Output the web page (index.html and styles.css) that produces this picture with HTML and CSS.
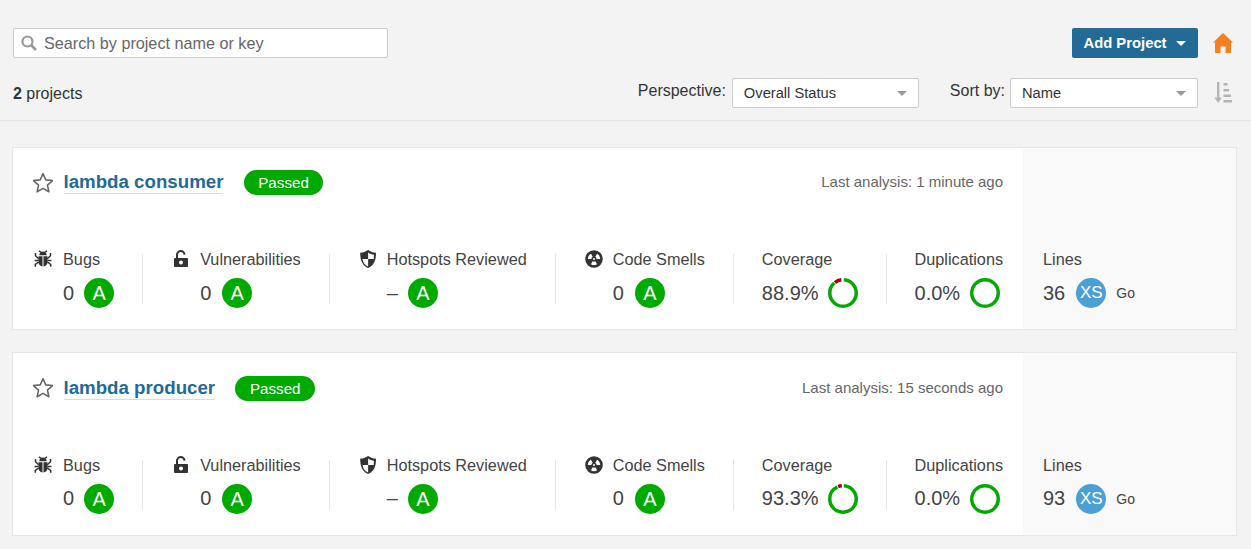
FILE: index.html
```html
<!DOCTYPE html>
<html lang="en">
  <head>
    <meta charset="UTF-8" />
    <title>Projects</title>
    <link rel="stylesheet" href="styles.css">
  </head>
  <body>
    <svg class="defs" width="0" height="0">
      <symbol id="i-star" viewBox="1 1 18 18"><path d="M10 1.600l2.500 5.600 6.100.6-4.600 4.100 1.300 6-5.300-3.100-5.300 3.100 1.300-6L1.400 7.800l6.100-.6z" fill="none" stroke="currentColor" stroke-width="1.400" stroke-linejoin="round"/></symbol>
      <symbol id="i-bug" viewBox="0 0 18 18"><path d="M5.300 5.200c0-2.200 1.600-3.700 3.700-3.700s3.700 1.500 3.700 3.700zM4.500 6.200h4v10.300C6 16.300 4.500 14.300 4.500 12zM9.500 6.200h4V12c0 2.300-1.500 4.300-4 4.500z"/><path d="M1.500 3v2.800l3.200 3M16.500 3v2.800l-3.200 3M.6 10.500h4.100M17.400 10.500h-4.100M1.300 16.800v-2.300l3.400-2.500M16.700 16.800v-2.300L13.300 12M5 .8l2.300 1.700M13 .8l-2.300 1.700" fill="none" stroke="currentColor" stroke-width="1.500"/></symbol>
      <symbol id="i-lock" viewBox="0 0 18 18"><path d="M3 8h12a1 1 0 0 1 1 1v7a1 1 0 0 1-1 1H3a1 1 0 0 1-1-1V9a1 1 0 0 1 1-1zm6 2.500a2 2 0 1 0 0 4 2 2 0 0 0 0-4z" fill-rule="evenodd"/><path d="M5 8V5.200a3.800 3.800 0 0 1 7.600-.6" fill="none" stroke="currentColor" stroke-width="2"/></symbol>
      <symbol id="i-shield" viewBox="1.400 .8 15 16.400"><path d="M9 .8c2.300 1.600 4.500 2.200 7.200 2.400 0 6.800-1.700 11.500-7.200 14-5.500-2.500-7.200-7.200-7.200-14C4.500 3 6.700 2.400 9 .8zM9 3v6H3.900c.4 3 1.900 5.500 5.100 6.900V9h5.100c.1-1 .2-2 .2-3.900C12.500 5 10.700 4.200 9 3z" fill-rule="evenodd"/></symbol>
      <symbol id="i-smell" viewBox="0 0 18 18"><path d="M9 .2a8.800 8.800 0 1 1 0 17.600A8.800 8.800 0 0 1 9 .2zM2.800 9A6.200 6.200 0 0 1 5.900 3.630L7.700 6.750A2.600 2.600 0 0 0 6.400 9zM15.200 9A6.200 6.200 0 0 0 12.100 3.630L10.300 6.750A2.600 2.600 0 0 1 11.600 9zM5.900 14.370A6.200 6.200 0 0 0 12.100 14.370L10.300 11.250A2.600 2.600 0 0 1 7.700 11.250z" fill-rule="evenodd"/><circle cx="9" cy="9" r="1" fill="#fff"/></symbol>
      <symbol id="i-ring" viewBox="0 0 30 30"><circle cx="15" cy="15" r="13.250" fill="none" stroke="currentColor" stroke-width="3.500"/></symbol>
    </svg>

    <header class="top-bar">
      <div class="top-row">
        <label class="search">
          <svg class="search-icon" width="16" height="16" viewBox="0 0 16 16"><circle cx="6.500" cy="6.500" r="5" fill="none" stroke="currentColor" stroke-width="2.200"/><path d="M10 10l5 5" stroke="currentColor" stroke-width="2.600"/></svg>
          <input type="text" placeholder="Search by project name or key" />
        </label>
        <button class="add-btn">Add Project<span class="caret"></span></button>
        <svg class="home" width="20" height="20" viewBox="0 0 20 20"><path d="M10 0l10 9.500h-2V20h-5.500v-6.500h-5V20H2V9.500H0z" fill="currentColor"/></svg>
      </div>
      <div class="filter-row">
        <div class="count"><strong>2</strong> projects</div>
        <span class="filter-label">Perspective:</span>
        <div class="select select-wide">Overall Status<span class="caret"></span></div>
        <span class="filter-label sort-label">Sort by:</span>
        <div class="select select-sort">Name<span class="caret"></span></div>
        <svg class="sort" width="20" height="24" viewBox="0 0 20 24"><path d="M4 1h2.400v15.500H9L5.200 22 1.400 16.500H4z" fill="currentColor"/><path d="M10.500 2h4v2.500h-4zM10.500 8h5.500v2.500h-5.500zM10.500 13.500h7.500V16h-7.500zM10.500 19H19v2.500h-8.500z" fill="currentColor"/></svg>
      </div>
    </header>

    <main class="projects">
      <article class="card">
        <div class="card-main">
          <div class="card-head">
            <svg class="star" width="20" height="20"><use href="#i-star"/></svg>
            <a class="title" href="#">lambda consumer</a>
            <span class="passed">Passed</span>
            <span class="last">Last analysis: 1 minute ago</span>
          </div>
          <div class="measures">
            <div class="measure"><svg class="m-icon"><use href="#i-bug"/></svg><div class="m-body"><div class="label">Bugs</div><div class="value">0<span class="grade">A</span></div></div></div>
            <div class="measure"><svg class="m-icon"><use href="#i-lock"/></svg><div class="m-body"><div class="label">Vulnerabilities</div><div class="value">0<span class="grade">A</span></div></div></div>
            <div class="measure"><svg class="m-icon"><use href="#i-shield"/></svg><div class="m-body"><div class="label">Hotspots Reviewed</div><div class="value">–<span class="grade">A</span></div></div></div>
            <div class="measure"><svg class="m-icon"><use href="#i-smell"/></svg><div class="m-body"><div class="label">Code Smells</div><div class="value">0<span class="grade">A</span></div></div></div>
            <div class="measure measure-plain"><div class="m-body"><div class="label">Coverage</div><div class="value">88.9%<svg class="ring" viewBox="0 0 30 30"><circle class="arc-ok" cx="15" cy="15" r="13.250" pathLength="100" stroke-dasharray="87.500 12.500" stroke-dashoffset="-1"/><circle class="arc-bad" cx="15" cy="15" r="13.250" pathLength="100" stroke-dasharray="8.500 91.500" stroke-dashoffset="-89.500"/></svg></div></div></div>
            <div class="measure measure-plain"><div class="m-body"><div class="label">Duplications</div><div class="value">0.0%<svg class="ring ring-full"><use href="#i-ring"/></svg></div></div></div>
          </div>
        </div>
        <div class="card-side">
          <div class="label">Lines</div>
          <div class="value">36<span class="size">XS</span><span class="lang">Go</span></div>
        </div>
      </article>

      <article class="card">
        <div class="card-main">
          <div class="card-head">
            <svg class="star" width="20" height="20"><use href="#i-star"/></svg>
            <a class="title" href="#">lambda producer</a>
            <span class="passed">Passed</span>
            <span class="last">Last analysis: 15 seconds ago</span>
          </div>
          <div class="measures">
            <div class="measure"><svg class="m-icon"><use href="#i-bug"/></svg><div class="m-body"><div class="label">Bugs</div><div class="value">0<span class="grade">A</span></div></div></div>
            <div class="measure"><svg class="m-icon"><use href="#i-lock"/></svg><div class="m-body"><div class="label">Vulnerabilities</div><div class="value">0<span class="grade">A</span></div></div></div>
            <div class="measure"><svg class="m-icon"><use href="#i-shield"/></svg><div class="m-body"><div class="label">Hotspots Reviewed</div><div class="value">–<span class="grade">A</span></div></div></div>
            <div class="measure"><svg class="m-icon"><use href="#i-smell"/></svg><div class="m-body"><div class="label">Code Smells</div><div class="value">0<span class="grade">A</span></div></div></div>
            <div class="measure measure-plain"><div class="m-body"><div class="label">Coverage</div><div class="value">93.3%<svg class="ring" viewBox="0 0 30 30"><circle class="arc-ok" cx="15" cy="15" r="13.250" pathLength="100" stroke-dasharray="92 8" stroke-dashoffset="-1"/><circle class="arc-bad" cx="15" cy="15" r="13.250" pathLength="100" stroke-dasharray="4.500 95.500" stroke-dashoffset="-94"/></svg></div></div></div>
            <div class="measure measure-plain"><div class="m-body"><div class="label">Duplications</div><div class="value">0.0%<svg class="ring ring-full"><use href="#i-ring"/></svg></div></div></div>
          </div>
        </div>
        <div class="card-side">
          <div class="label">Lines</div>
          <div class="value">93<span class="size">XS</span><span class="lang">Go</span></div>
        </div>
      </article>
    </main>
  </body>
</html>
```

FILE: styles.css
```css
body {
  margin: 0;
  background-color: #f3f3f3;
  color: #333;
  font-family: "Liberation Sans", Arial, sans-serif;
  font-size: 16px;
  overflow: hidden;
}
.defs {
  position: absolute;
}
.top-bar {
  padding: 28px 18px 12px 13px;
  border-bottom: 1px solid #e6e6e6;
}
.top-row,
.filter-row {
  display: flex;
  align-items: center;
  height: 30px;
}
.filter-row {
  margin-top: 20px;
}
.search {
  display: flex;
  align-items: center;
  width: 373px;
  height: 28px;
  background-color: #fff;
  border: 1px solid #cdcdcd;
  border-radius: 2px;
}
.search-icon {
  margin: 0 7px;
  color: #999;
  flex: none;
}
.search input {
  border: none;
  outline: none;
  padding: 0;
  width: 320px;
  color: #333;
  font-family: inherit;
  font-size: 16.200px;
}
.search input::placeholder {
  color: #666;
  opacity: 1;
}
.add-btn {
  display: flex;
  align-items: center;
  margin-left: auto;
  width: 126px;
  height: 30px;
  padding: 0 0 0 11.500px;
  background-color: #236a97;
  color: #fff;
  border: none;
  border-radius: 2px;
  font-family: inherit;
  font-size: 14.800px;
  font-weight: bold;
}
.add-btn .caret {
  margin-left: 9px;
  border-top-color: #fff;
}
.caret {
  width: 0;
  height: 0;
  border-left: 5px solid transparent;
  border-right: 5px solid transparent;
  border-top: 5px solid #999;
}
.home {
  margin-left: 15px;
  color: #f4801f;
}
.count {
  margin-right: auto;
  margin-top: 2px;
}
.filter-label {
  margin-right: 6px;
  margin-top: -5px;
}
.sort-label {
  margin-left: 31px;
  margin-right: 5px;
}
.select {
  display: flex;
  align-items: center;
  justify-content: space-between;
  box-sizing: border-box;
  height: 30px;
  padding: 0 11px 0 11px;
  background-color: #fff;
  border: 1px solid #cdcdcd;
  border-radius: 2px;
  font-size: 14.700px;
}
.select-wide {
  width: 187px;
}
.select-sort {
  width: 188px;
}
.sort {
  margin-left: 15px;
  color: #b4b4b4;
}
.projects {
  padding: 25.600px 14px 0 12px;
}
.card {
  display: flex;
  box-sizing: border-box;
  height: 183.600px;
  margin-bottom: 21.900px;
  background-color: #fff;
  border: 1px solid #e6e6e6;
}
.card-main {
  width: 1010px;
  flex: none;
  padding-left: 20px;
  box-sizing: border-box;
}
.card-head {
  display: flex;
  align-items: center;
  height: 25px;
  margin-top: 22.500px;
}
.star {
  color: #666;
  margin-right: 10.500px;
}
.title {
  color: #236a97;
  font-size: 18.700px;
  font-weight: bold;
  text-decoration: none;
  border-bottom: 1px solid #cfdfea;
  line-height: 22px;
}
.passed {
  margin-left: 20.300px;
  height: 25px;
  line-height: 25px;
  padding: 0 14.500px;
  border-radius: 13px;
  background-color: #00aa00;
  color: #fff;
  font-size: 15.200px;
}
.last {
  margin-left: auto;
  margin-right: 20px;
  margin-top: -2px;
  color: #666;
  font-size: 15px;
}
.measures {
  display: flex;
  margin-top: 59px;
  padding-left: 1px;
  height: 50px;
}
.measure {
  display: flex;
  padding: 0 28px 0 29px;
  border-right: 1px solid #e6e6e6;
  height: 50px;
}
.measure:first-child {
  padding-left: 0;
}
.measure:first-child .m-icon {
  margin-right: 11px;
}
.measure:last-child {
  border-right: none;
  padding-right: 0;
}
.measure:nth-child(even) .grade {
  margin-left: 11px;
}
.measure-plain {
  padding-left: 28px;
}
.m-icon {
  width: 18px;
  height: 18px;
  fill: #333;
  color: #333;
  margin-top: -4px;
  margin-right: 10px;
  flex: none;
}
.m-body {
  margin-top: -5px;
}
.label {
  color: #444;
  font-size: 16.250px;
  line-height: 20px;
  white-space: nowrap;
}
.value {
  display: flex;
  align-items: center;
  height: 30px;
  margin-top: 9px;
  color: #444;
  font-size: 20px;
  white-space: nowrap;
}
.grade,
.size {
  display: inline-block;
  width: 30px;
  height: 30px;
  border-radius: 50%;
  margin-left: 10px;
  text-align: center;
  color: #fff;
  line-height: 30px;
}
.grade {
  background-color: #00aa00;
}
.size {
  background-color: #4b9fd5;
  font-size: 17px;
  margin-left: 11px;
}
.ring {
  width: 30px;
  height: 30px;
  margin-left: 9px;
  transform: rotate(-90deg);
}
.ring-full {
  color: #00aa00;
  margin-left: 10px;
  transform: none;
}
.arc-ok,
.arc-bad {
  fill: none;
  stroke-width: 3.500;
}
.arc-ok {
  stroke: #00aa00;
}
.arc-bad {
  stroke: #a4030f;
}
.card-side {
  flex: 1;
  padding: 101.500px 0 0 20px;
  background-color: #f9f9f9;
}
.lang {
  margin-left: 10px;
  font-size: 14px;
}
```
